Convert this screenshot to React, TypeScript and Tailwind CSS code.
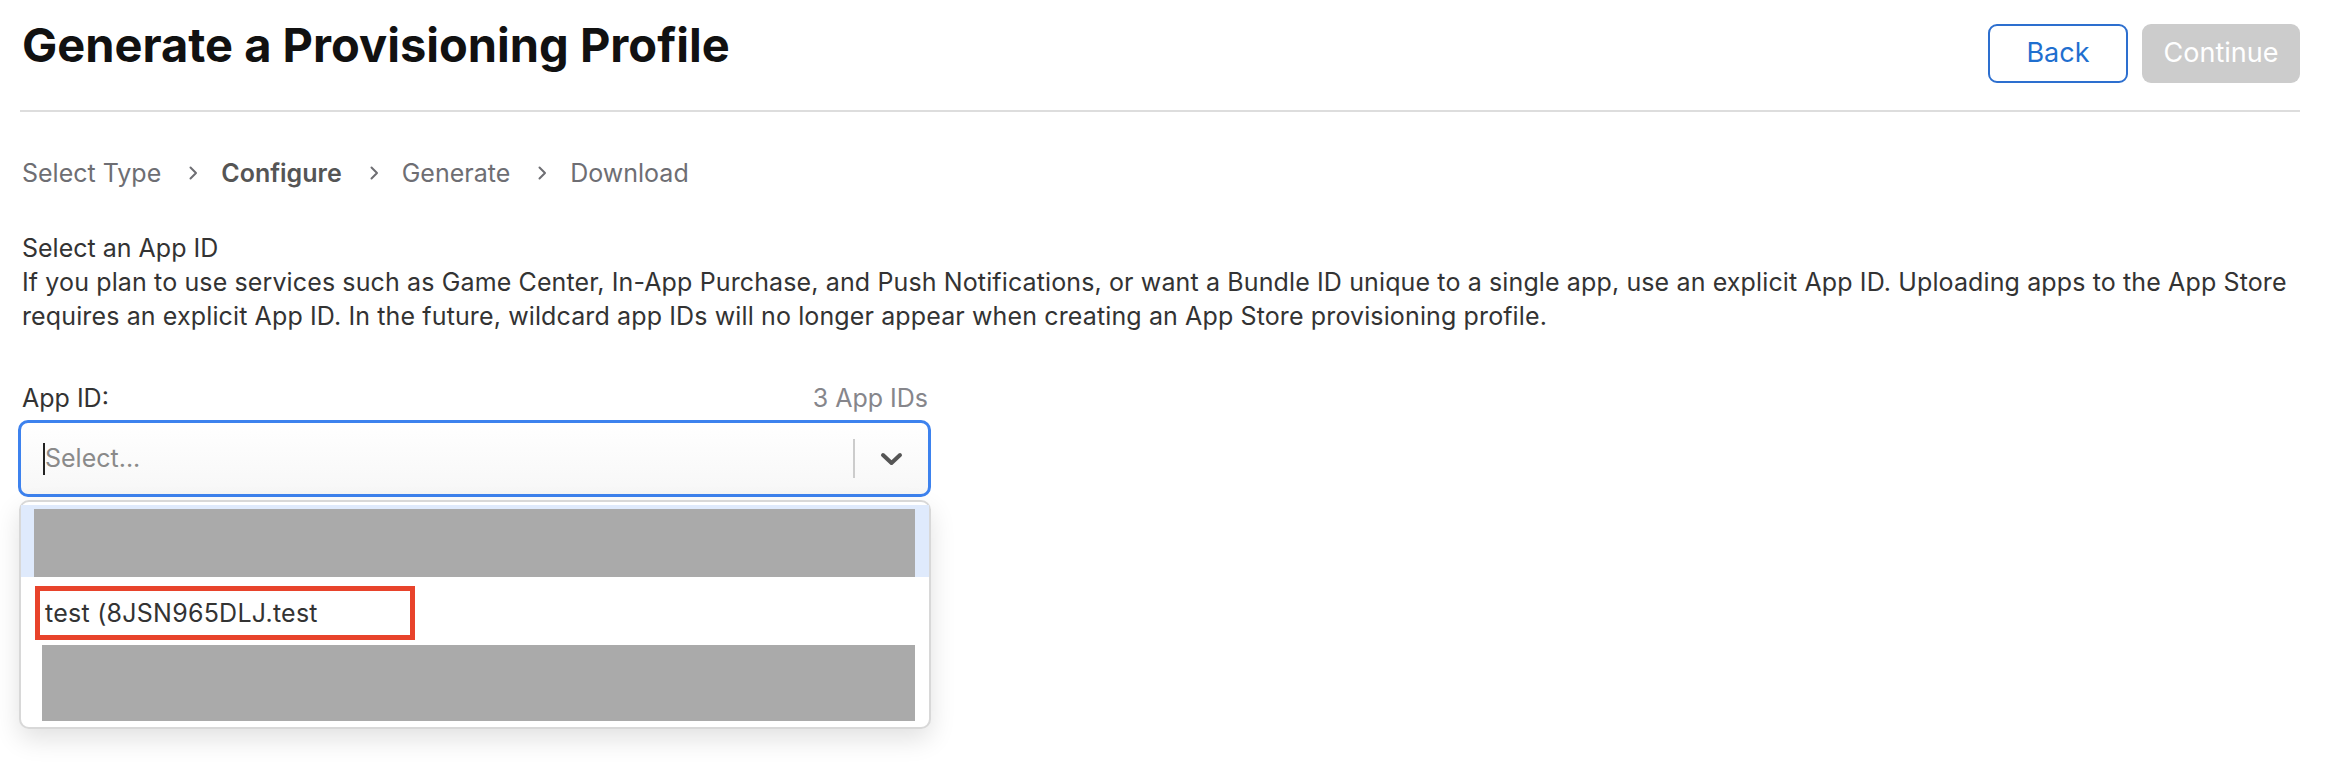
function Chevron() {
  return (
    <svg width="9" height="14" viewBox="0 0 9 14" fill="none" className="shrink-0">
      <path d="M1.5 1.5L7 7L1.5 12.5" stroke="#6e6e73" strokeWidth="2" strokeLinecap="round" strokeLinejoin="round" />
    </svg>
  );
}

export default function App() {
  return (
    <div className="min-h-screen bg-white pl-[20px] pr-[26px] font-['Inter','Noto_Sans',sans-serif] text-[#333]">
      <header className="flex h-[83px] items-start justify-between">
        <h1 className="ml-[2px] pt-[17px] text-[47px] leading-[56px] font-bold text-[#111]">
          Generate a Provisioning Profile
        </h1>
        <div className="mt-[24px] flex gap-[14px]">
          <button className="h-[59px] w-[140px] rounded-[9px] border-2 border-[#2d6fcf] bg-white text-[27px] text-[#1f6fcf]">
            Back
          </button>
          <button className="h-[59px] w-[158px] rounded-[9px] bg-[#cccccc] text-[27px] text-white">
            Continue
          </button>
        </div>
      </header>
      <div className="mt-[27px] h-[2px] bg-[#dddddd]" />

      <nav className="ml-[2px] mt-[46px] flex items-center text-[25px] leading-[30px] text-[#6e6e73]">
        <span>Select Type</span>
        <span className="ml-[28px] mr-[23px]"><Chevron /></span>
        <span className="font-semibold text-[#555]">Configure</span>
        <span className="ml-[28px] mr-[23px]"><Chevron /></span>
        <span>Generate</span>
        <span className="ml-[28px] mr-[23px]"><Chevron /></span>
        <span>Download</span>
      </nav>

      <section className="ml-[2px] mt-[43px] text-[25px] leading-[34px] text-[#333]">
        <h2>Select an App ID</h2>
        <p className="tracking-[0.005em]">
          If you plan to use services such as Game Center, In-App Purchase, and Push Notifications, or want a Bundle ID unique to a single app, use an explicit App ID. Uploading apps to the App Store
          <br />
          requires an explicit App ID. In the future, wildcard app IDs will no longer appear when creating an App Store provisioning profile.
        </p>
      </section>

      <div className="ml-[-2px] mt-[50px] w-[913px]">
        <div className="flex items-baseline justify-between pl-[4px] pr-[3px] text-[25px] leading-[30px]">
          <span className="text-[#333]">App ID:</span>
          <span className="text-[#86868b]">3 App IDs</span>
        </div>

        <div className="mt-[7px] flex h-[77px] items-center rounded-[10px] border-[3px] border-[#3d82ee] bg-linear-to-b from-white to-[#f7f7f7]">
          <div className="flex flex-1 items-center pl-[22px]">
            <span className="h-[32px] w-[2px] bg-[#222]" />
            <span className="text-[25px] text-[#8a8a8a]">Select...</span>
          </div>
          <span className="h-[39px] w-[2px] bg-[#cccccc]" />
          <span className="flex w-[73px] justify-center">
            <svg width="23" height="14" viewBox="0 0 23 14" fill="none">
              <path d="M3 3L11.5 11L20 3" stroke="#555" strokeWidth="4" strokeLinecap="round" strokeLinejoin="round" />
            </svg>
          </span>
        </div>

        <div className="ml-[1px] mt-[3px] rounded-[10px] border-2 border-[#d8d8d8] bg-white pt-[3px] pb-[6px] shadow-[0_10px_26px_rgba(0,0,0,0.12)]">
          <div className="bg-[#dfeafc] pl-[13px] pr-[14px] pt-[4px]">
            <div className="h-[68px] bg-[#aaaaaa]" />
          </div>
          <div className="pl-[14px] pt-[9px]">
            <div className="flex h-[54px] w-[380px] items-center border-[5px] border-[#e8432b] pl-[5px] pt-[1px] text-[25px] tracking-[0.01em] text-[#333]">
              test (8JSN965DLJ.test
            </div>
          </div>
          <div className="pl-[21px] pr-[14px] pt-[5px]">
            <div className="h-[76px] bg-[#aaaaaa]" />
          </div>
        </div>
      </div>
    </div>
  );
}
